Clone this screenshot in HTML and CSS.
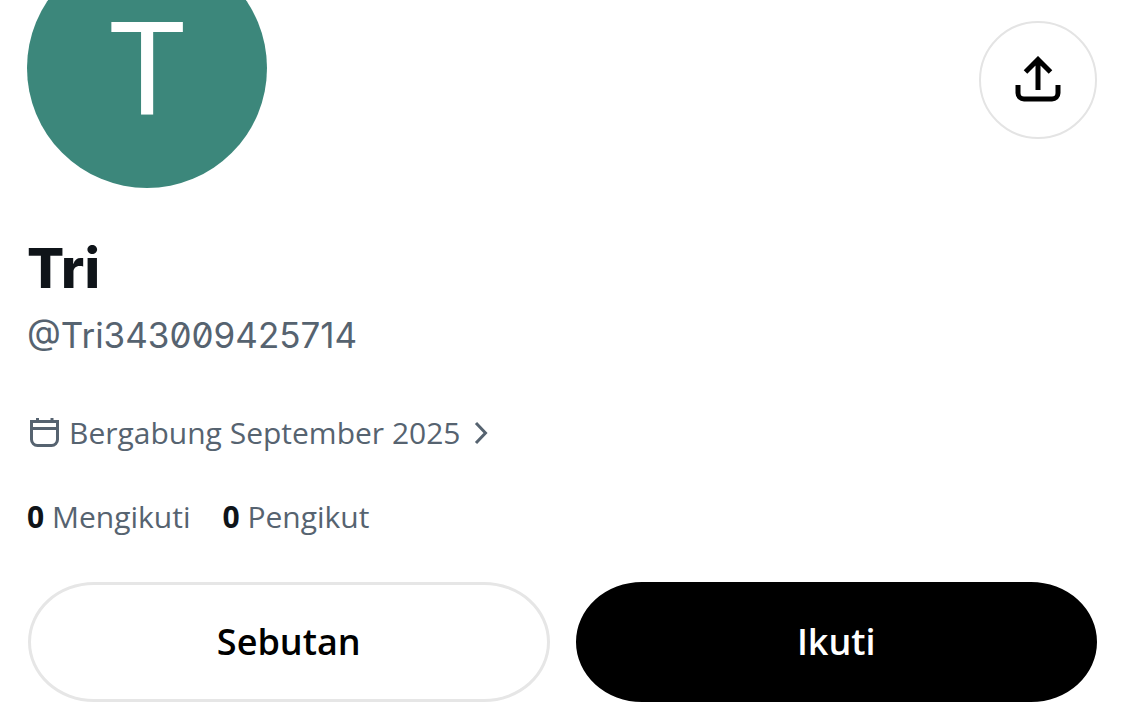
FILE: index.html
```html
<!DOCTYPE html>
<html lang="id">
<head>
  <meta charset="UTF-8">
  <meta name="viewport" content="width=device-width, initial-scale=1.0">
  <title>Tri (@Tri343009425714)</title>
  <link rel="stylesheet" href="styles.css">
</head>
<body>
<main class="profile">
  <div class="top">
    <div class="avatar">T</div>
    <button class="share" aria-label="Bagikan">
      <svg width="48" height="48" viewBox="0 0 48 48" fill="none" stroke="currentColor" stroke-width="5">
        <path d="M24 34V4M11.500 16L24 3.500L36.500 16"/>
        <path d="M4 29v8a6 6 0 0 0 6 6h28a6 6 0 0 0 6-6V29"/>
      </svg>
    </button>
  </div>

  <h1 class="name">Tri</h1>
  <p class="handle">@Tri343009425714</p>

  <a class="joined" href="#">
    <svg class="calendar" width="32" height="32" viewBox="0 0 32 32" fill="none" stroke="currentColor" stroke-width="3">
      <path d="M2.500 4.500h26v18a6 6 0 0 1-6 6h-14a6 6 0 0 1-6-6zM2 11.500h27M8.500 1v4M23 1v4"/>
    </svg>
    <span>Bergabung September 2025</span>
    <svg class="chevron" width="14" height="24" viewBox="0 0 14 24" fill="none" stroke="currentColor" stroke-width="3">
      <path d="M2 2L11.500 12L2 22"/>
    </svg>
  </a>

  <div class="stats">
    <a href="#"><b>0</b> Mengikuti</a>
    <a href="#"><b>0</b> Pengikut</a>
  </div>

  <div class="actions">
    <button class="btn">Sebutan</button>
    <button class="btn follow">Ikuti</button>
  </div>
</main>
</body>
</html>
```
FILE: styles.css
```css
* {
  box-sizing: border-box;
}

body {
  margin: 0;
  background: #fff;
  color: #0f1419;
  font-family: "Open Sans", sans-serif;
  overflow-x: hidden;
}

a {
  color: inherit;
  text-decoration: none;
}

.profile {
  padding: 0 28px 24px 27px;
}

.top {
  display: flex;
  justify-content: space-between;
  align-items: flex-end;
  height: 188px;
}

.avatar {
  width: 240px;
  height: 240px;
  border-radius: 50%;
  background: #3c877b;
  color: #fff;
  font-family: Roboto, sans-serif;
  font-size: 130px;
  line-height: 244px;
  text-align: center;
}

.share {
  display: flex;
  align-items: center;
  justify-content: center;
  width: 118px;
  height: 118px;
  margin-bottom: 49px;
  padding: 0;
  border: 2px solid #e4e4e4;
  border-radius: 50%;
  background: #fff;
  color: #000;
  cursor: pointer;
}

.name {
  margin: 45px 0 0;
  font-family: Inter, sans-serif;
  font-size: 55px;
  font-weight: 800;
  line-height: 70px;
}

.handle {
  margin: 7px 0 0;
  color: #566370;
  font-family: Inter, sans-serif;
  font-size: 35px;
  font-feature-settings: "zero";
  line-height: 50px;
}

.joined {
  display: flex;
  align-items: center;
  margin-top: 51px;
  color: #566370;
  font-size: 30px;
  line-height: 44px;
}

.calendar {
  margin: 0 8px 0 2px;
}

.chevron {
  margin-left: 13px;
}

.stats {
  display: flex;
  gap: 32px;
  margin-top: 40px;
  color: #566370;
  font-size: 30px;
  line-height: 44px;
}

.stats b {
  color: #0f1419;
}

.actions {
  display: grid;
  grid-template-columns: 1fr 1fr;
  gap: 26px;
  margin: 43px 0 0 1px;
}

.btn {
  height: 120px;
  padding: 0 0 2px;
  border: 3px solid #e6e6e6;
  border-radius: 66px / 60px;
  background: #fff;
  color: #000;
  font-family: inherit;
  font-size: 36px;
  font-weight: 600;
  cursor: pointer;
}

.follow {
  border-color: #000;
  background: #000;
  color: #fff;
}
```
